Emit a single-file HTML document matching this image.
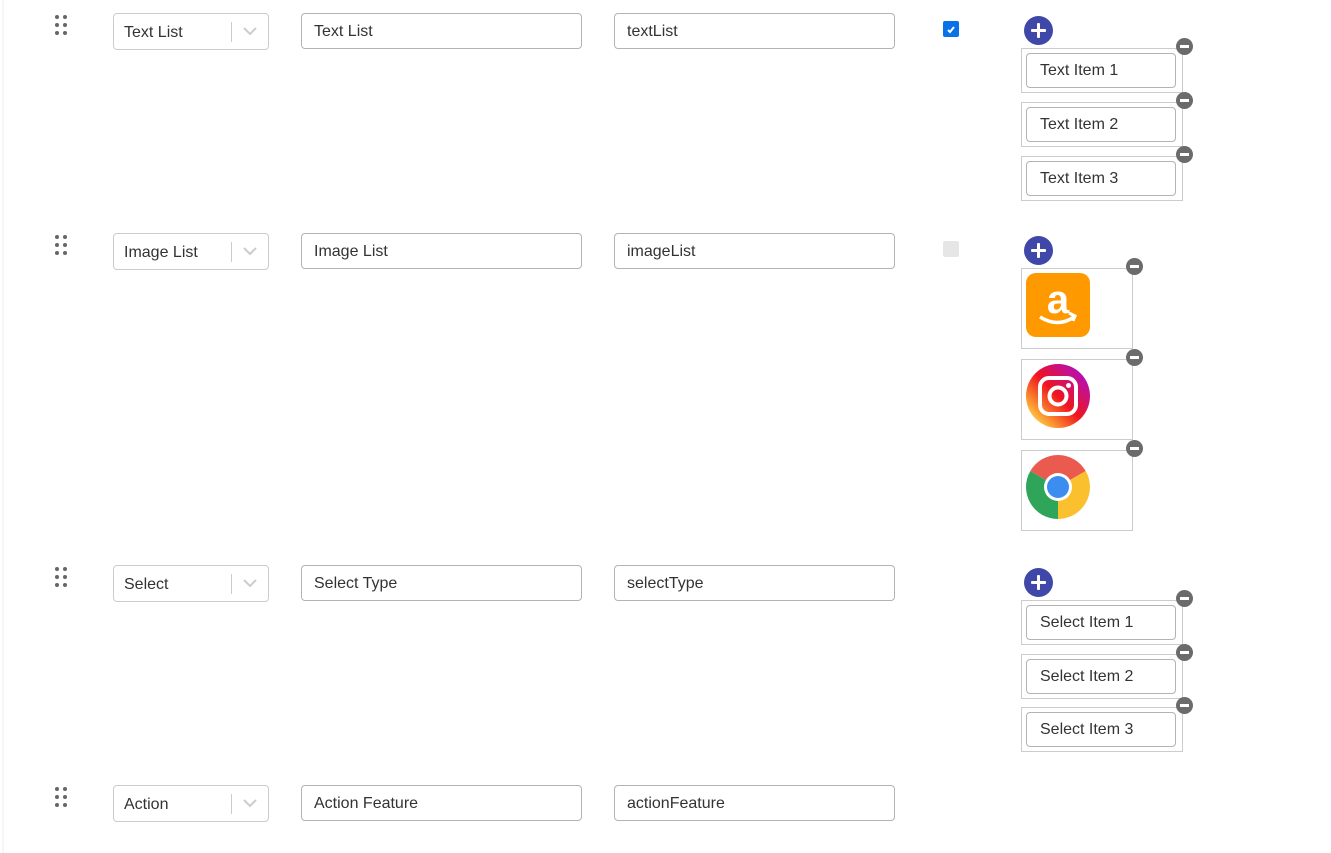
<!DOCTYPE html>
<html><head><meta charset="utf-8"><style>
*{box-sizing:border-box}
body{margin:0;width:1331px;height:853px;background:#fff;position:relative;overflow:hidden;font-family:"Liberation Sans",Arial,sans-serif;color:#333;font-size:16px}
.edge{position:absolute;left:2px;top:0;width:2px;height:853px;background:#f6f6f6}
.a{position:absolute}
.drag{position:absolute;width:14px;height:20px}
.drag i{position:absolute;width:4px;height:4px;border-radius:50%;background:#666}
.sel{position:absolute;width:156px;height:37px;border:1px solid #ccc;border-radius:4px;padding:10px 0 0 10px}
.sel .sep{position:absolute;left:117px;top:8px;width:1px;height:20px;background:#ccc}
.sel svg{position:absolute;left:129px;top:13px}
.inp{position:absolute;width:281px;height:36px;border:1px solid #b3b3b3;border-radius:4px;padding:9px 0 0 12px}
.plus{position:absolute;width:29px;height:29px;border-radius:50%;background:#3f48a8}
.plus:before{content:"";position:absolute;left:7px;top:13px;width:15px;height:3px;background:#fff;border-radius:1px}
.plus:after{content:"";position:absolute;left:13px;top:7px;width:3px;height:15px;background:#fff;border-radius:1px}
.box{position:absolute;left:1021px;width:162px;height:45px;border:1px solid #ccc}
.box .in{position:absolute;left:4px;top:4px;width:150px;height:35px;border:1px solid #b3b3b3;border-radius:4px;padding:8px 0 0 13px}
.min{position:absolute;width:17px;height:17px;border-radius:50%;background:#6b6b6b}
.min:before{content:"";position:absolute;left:4px;top:7px;width:9px;height:3px;background:#fff}
.ibox{position:absolute;left:1021px;width:112px;height:81px;border:1px solid #ccc}
.ibox svg{position:absolute;left:4px;top:4px}
</style></head><body>
<div class="edge"></div>

<div class="drag" style="left:55px;top:15px"><i style="left:0;top:0"></i><i style="left:8px;top:0"></i><i style="left:0;top:8px"></i><i style="left:8px;top:8px"></i><i style="left:0;top:16px"></i><i style="left:8px;top:16px"></i></div>
<div class="drag" style="left:55px;top:235px"><i style="left:0;top:0"></i><i style="left:8px;top:0"></i><i style="left:0;top:8px"></i><i style="left:8px;top:8px"></i><i style="left:0;top:16px"></i><i style="left:8px;top:16px"></i></div>
<div class="drag" style="left:55px;top:567px"><i style="left:0;top:0"></i><i style="left:8px;top:0"></i><i style="left:0;top:8px"></i><i style="left:8px;top:8px"></i><i style="left:0;top:16px"></i><i style="left:8px;top:16px"></i></div>
<div class="drag" style="left:55px;top:787px"><i style="left:0;top:0"></i><i style="left:8px;top:0"></i><i style="left:0;top:8px"></i><i style="left:8px;top:8px"></i><i style="left:0;top:16px"></i><i style="left:8px;top:16px"></i></div>

<div class="sel" style="left:113px;top:13px">Text List<div class="sep"></div><svg width="14" height="9"><path d="M1 1l6 6 6-6" fill="none" stroke="#ccc" stroke-width="2"/></svg></div>
<div class="sel" style="left:113px;top:233px">Image List<div class="sep"></div><svg width="14" height="9"><path d="M1 1l6 6 6-6" fill="none" stroke="#ccc" stroke-width="2"/></svg></div>
<div class="sel" style="left:113px;top:565px">Select<div class="sep"></div><svg width="14" height="9"><path d="M1 1l6 6 6-6" fill="none" stroke="#ccc" stroke-width="2"/></svg></div>
<div class="sel" style="left:113px;top:785px">Action<div class="sep"></div><svg width="14" height="9"><path d="M1 1l6 6 6-6" fill="none" stroke="#ccc" stroke-width="2"/></svg></div>

<div class="inp" style="left:301px;top:13px">Text List</div>
<div class="inp" style="left:614px;top:13px">textList</div>
<div class="inp" style="left:301px;top:233px">Image List</div>
<div class="inp" style="left:614px;top:233px">imageList</div>
<div class="inp" style="left:301px;top:565px">Select Type</div>
<div class="inp" style="left:614px;top:565px">selectType</div>
<div class="inp" style="left:301px;top:785px">Action Feature</div>
<div class="inp" style="left:614px;top:785px">actionFeature</div>

<svg class="a" style="left:943px;top:21px" width="16" height="16"><rect width="16" height="16" rx="2" fill="#0a72e8"/><path d="M5 9l2 2 4-5" fill="none" stroke="#fff" stroke-width="2"/></svg>
<div class="a" style="left:943px;top:241px;width:16px;height:16px;background:#e6e6e6;border-radius:2px"></div>

<div class="plus" style="left:1024px;top:16px"></div>
<div class="box" style="top:48px"><div class="in">Text Item 1</div></div>
<div class="box" style="top:102px"><div class="in">Text Item 2</div></div>
<div class="box" style="top:156px"><div class="in">Text Item 3</div></div>
<div class="min" style="left:1176px;top:38px"></div>
<div class="min" style="left:1176px;top:92px"></div>
<div class="min" style="left:1176px;top:146px"></div>

<div class="plus" style="left:1024px;top:236px"></div>
<div class="ibox" style="top:268px"><svg width="64" height="64" viewBox="0 0 64 64"><rect width="64" height="64" rx="10" fill="#ff9900"/><text x="32" y="40" text-anchor="middle" font-family="Liberation Sans,sans-serif" font-weight="bold" font-size="40" fill="#fff">a</text><path d="M14 44q18 11 34 0" fill="none" stroke="#fff" stroke-width="3.5"/><path d="M43 40l6 3-2 5" fill="none" stroke="#fff" stroke-width="3"/></svg></div>
<div class="ibox" style="top:359px"><svg width="64" height="64" viewBox="0 0 64 64"><defs><linearGradient id="ig" x1="0.1" y1="0.9" x2="0.9" y2="0.1"><stop offset="0" stop-color="#fdd84e"/><stop offset="0.2" stop-color="#fb8a2e"/><stop offset="0.5" stop-color="#f0141e"/><stop offset="1" stop-color="#b10dc4"/></linearGradient></defs><circle cx="32" cy="32" r="32" fill="url(#ig)"/><rect x="14" y="14" width="36" height="36" rx="9" fill="none" stroke="#fff" stroke-width="4"/><circle cx="32" cy="32" r="8.5" fill="none" stroke="#fff" stroke-width="4"/><circle cx="42.5" cy="21.5" r="2.5" fill="#fff"/></svg></div>
<div class="ibox" style="top:450px"><svg width="64" height="64" viewBox="0 0 64 64"><path d="M32 32L4.3 16A32 32 0 0 1 59.7 16Z" fill="#ea5a4e"/><path d="M32 32L59.7 16A32 32 0 0 1 32 64Z" fill="#fbc02d"/><path d="M32 32L32 64A32 32 0 0 1 4.3 16Z" fill="#2fa55a"/><circle cx="32" cy="32" r="14" fill="#fff"/><circle cx="32" cy="32" r="11" fill="#3b8ef0"/></svg></div>
<div class="min" style="left:1126px;top:258px"></div>
<div class="min" style="left:1126px;top:349px"></div>
<div class="min" style="left:1126px;top:440px"></div>

<div class="plus" style="left:1024px;top:568px"></div>
<div class="box" style="top:600px"><div class="in">Select Item 1</div></div>
<div class="box" style="top:654px"><div class="in">Select Item 2</div></div>
<div class="box" style="top:707px"><div class="in">Select Item 3</div></div>
<div class="min" style="left:1176px;top:590px"></div>
<div class="min" style="left:1176px;top:644px"></div>
<div class="min" style="left:1176px;top:697px"></div>
</body></html>
